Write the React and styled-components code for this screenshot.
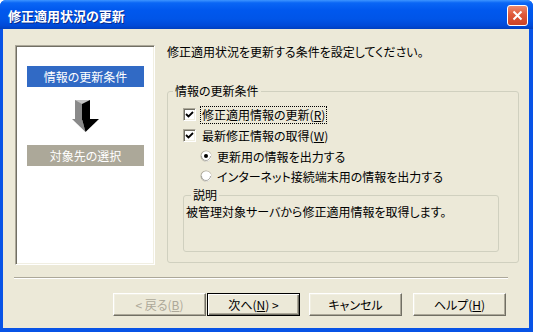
import React from "react"
import styled, { createGlobalStyle } from "styled-components"

const GlobalStyle = createGlobalStyle`
  html, body {
    margin: 0;
    padding: 0;
    background: #ffffff;
  }
  body {
    font-family: "Noto Sans CJK JP", "Noto Sans", sans-serif;
    font-size: 12px;
    font-feature-settings: "palt";
  }
`

const Window = styled.div`
  width: 533px;
  height: 332px;
  display: flex;
  flex-direction: column;
  background: #0853e6;
  border-radius: 6px 6px 0 0;
  overflow: hidden;
`

const TitleBar = styled.div`
  height: 29px;
  flex: none;
  display: flex;
  align-items: center;
  padding: 2px 5px 0 8px;
  box-sizing: border-box;
  background: linear-gradient(
    to bottom,
    #3d95ff 0%,
    #0a66f5 10%,
    #0058ee 35%,
    #0055e8 65%,
    #004ad8 88%,
    #003fbf 100%
  );
`

const Title = styled.span`
  flex: 1;
  color: #ffffff;
  font-weight: bold;
  font-size: 13px;
  line-height: 16px;
  text-shadow: 1px 1px 0 #0a2a8a;
`

const CloseButton = styled.button`
  width: 21px;
  height: 21px;
  padding: 0;
  display: flex;
  align-items: center;
  justify-content: center;
  border: 1px solid #ffffff;
  border-radius: 3px;
  background: linear-gradient(to bottom, #ec8a6d 0%, #e0593a 45%, #cc4224 100%);
`

const Body = styled.div`
  flex: 1;
  margin: 0 4px 4px 3px;
  padding: 16px 10px 0 12px;
  background: #ece9d8;
  display: flex;
  flex-direction: column;
`

const MainRow = styled.div`
  display: flex;
  gap: 12px;
  height: 220px;
`

const StepPanel = styled.div`
  width: 140px;
  height: 220px;
  flex: none;
  box-sizing: border-box;
  background: #ffffff;
  border: 1px solid;
  border-color: #aca899 #ffffff #ffffff #aca899;
  box-shadow: inset 1px 1px 0 #716f64, inset -1px -1px 0 #f1efe2;
  display: flex;
  flex-direction: column;
  align-items: center;
  padding-top: 20px;
  gap: 13px;
`

const StepLabel = styled.div`
  width: 117px;
  height: 21px;
  margin-left: 1px;
  display: flex;
  align-items: center;
  justify-content: center;
  color: #ffffff;
  background: ${p => (p.$active ? "#316ac5" : "#aca899")};
`

const RightColumn = styled.div`
  flex: 1;
  display: flex;
  flex-direction: column;
`

const Intro = styled.div`
  line-height: 14px;
`

const GroupBox = styled.fieldset`
  margin: ${p => p.$top}px 0 0 0;
  padding: 0;
  border: 1px solid #d0d0bf;
  border-radius: 3px;
  min-width: 0;
`

const GroupLegend = styled.legend`
  margin-left: ${p => p.$indent}px;
  padding: 0 2px;
  line-height: 14px;
`

const GroupContent = styled.div`
  padding: 6px 19px 10px 15px;
`

const CheckRow = styled.label`
  height: 21px;
  display: flex;
  align-items: center;
  gap: 5px;
`

const CheckBox = styled.span`
  width: 13px;
  height: 13px;
  box-sizing: border-box;
  flex: none;
  background: #ffffff;
  border: 1px solid;
  border-color: #aca899 #ffffff #ffffff #aca899;
  box-shadow: inset 1px 1px 0 #716f64, inset -1px -1px 0 #f1efe2;
  display: flex;
  align-items: center;
  justify-content: center;
`

const CheckText = styled.span`
  padding: 0 1px;
  line-height: 16px;
  outline: ${p => (p.$focused ? "1px dotted #000000" : "none")};
`

const RadioRow = styled.label`
  height: 20px;
  display: flex;
  align-items: center;
  gap: 5px;
  padding-left: 17px;
`

const DescBody = styled.div`
  height: 49px;
  box-sizing: border-box;
  padding: 3px 3px 0 2px;
  line-height: 14px;
`

const Separator = styled.div`
  margin: 12px 11px 0 -1px;
  border-top: 1px solid #aca899;
  border-bottom: 1px solid #ffffff;
`

const ButtonRow = styled.div`
  margin: 14px 13px 0 0;
  display: flex;
  justify-content: flex-end;
`

const Button = styled.button`
  width: 93px;
  height: 23px;
  margin-left: ${p => p.$gap}px;
  padding: 0;
  font-family: inherit;
  font-size: 12px;
  font-feature-settings: "palt";
  background: #ece9d8;
  color: ${p => (p.disabled ? "#aca899" : "#000000")};
  border: 1px solid;
  border-color: ${p =>
    p.$default ? "#000000" : "#ffffff #716f64 #716f64 #ffffff"};
  box-shadow: ${p =>
    p.$default
      ? "inset 1px 1px 0 #ffffff, inset -1px -1px 0 #716f64, inset -2px -2px 0 #aca899"
      : "inset -1px -1px 0 #aca899, inset 1px 1px 0 #f1efe2"};
`

const Key = styled.u`
  text-underline-offset: 1px;
`

const CloseIcon = () => (
  <svg width="11" height="11" viewBox="0 0 11 11">
    <path d="M1.5 1.5 L9.5 9.5 M9.5 1.5 L1.5 9.5" stroke="#ffffff" strokeWidth="2" />
  </svg>
)

const DownArrow = () => (
  <svg width="27" height="32" viewBox="0 0 27 32">
    <rect x="3" y="0" width="7" height="20" fill="#8a8a8a" />
    <rect x="10" y="0" width="8" height="20" fill="#000000" />
    <polygon points="3,0 18,0 10,4" fill="#c4c4c4" />
    <polygon points="0,19 10,19 13.5,32" fill="#8a8a8a" />
    <polygon points="10,19 27,19 13.5,32" fill="#000000" />
  </svg>
)

const CheckMark = () => (
  <svg width="9" height="9" viewBox="0 0 9 9">
    <path d="M1 4 L3.5 6.5 L8 2" stroke="#000000" strokeWidth="1.8" fill="none" />
  </svg>
)

const Radio = ({ checked }) => (
  <svg width="12" height="12" viewBox="0 0 12 12">
    <circle cx="6" cy="6" r="5.5" fill="#aca899" />
    <circle cx="6.5" cy="6.5" r="5" fill="#ffffff" />
    <circle cx="6" cy="6" r="4.5" fill="#ffffff" stroke="#716f64" strokeWidth="0.6" strokeDasharray="14 20" />
    {checked && <circle cx="6" cy="6" r="2" fill="#000000" />}
  </svg>
)

const App = () => (
  <>
    <GlobalStyle />
    <Window>
      <TitleBar>
        <Title>修正適用状況の更新</Title>
        <CloseButton>
          <CloseIcon />
        </CloseButton>
      </TitleBar>
      <Body>
        <MainRow>
          <StepPanel>
            <StepLabel $active>情報の更新条件</StepLabel>
            <DownArrow />
            <StepLabel>対象先の選択</StepLabel>
          </StepPanel>
          <RightColumn>
            <Intro>修正適用状況を更新する条件を設定してください。</Intro>
            <GroupBox $top={25}>
              <GroupLegend $indent={5}>情報の更新条件</GroupLegend>
              <GroupContent>
                <CheckRow>
                  <CheckBox>
                    <CheckMark />
                  </CheckBox>
                  <CheckText $focused>
                    修正適用情報の更新(<Key>R</Key>)
                  </CheckText>
                </CheckRow>
                <CheckRow>
                  <CheckBox>
                    <CheckMark />
                  </CheckBox>
                  <CheckText>
                    最新修正情報の取得(<Key>W</Key>)
                  </CheckText>
                </CheckRow>
                <RadioRow>
                  <Radio checked />
                  <span>更新用の情報を出力する</span>
                </RadioRow>
                <RadioRow>
                  <Radio />
                  <span>インターネット接続端末用の情報を出力する</span>
                </RadioRow>
                <GroupBox $top={2}>
                  <GroupLegend $indent={7}>説明</GroupLegend>
                  <DescBody>被管理対象サーバから修正適用情報を取得します。</DescBody>
                </GroupBox>
              </GroupContent>
            </GroupBox>
          </RightColumn>
        </MainRow>
        <Separator />
        <ButtonRow>
          <Button disabled $gap={0}>
            &lt; 戻る(<Key>B</Key>)
          </Button>
          <Button $default $gap={1}>
            次へ(<Key>N</Key>) &gt;
          </Button>
          <Button $gap={9}>キャンセル</Button>
          <Button $gap={11}>
            ヘルプ(<Key>H</Key>)
          </Button>
        </ButtonRow>
      </Body>
    </Window>
  </>
)

export default App
